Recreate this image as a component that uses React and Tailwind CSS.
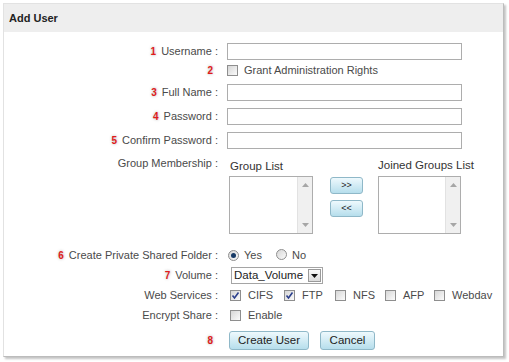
import React from 'react';

const Num = ({ n }) => (
  <span className="mr-[5px] text-[10px] font-bold text-[#e01b1b] [text-shadow:0_0_3px_#aaa]">{n}</span>
);

const Box = ({ checked }) => (
  <span className="inline-flex h-[11px] w-[11px] shrink-0 items-center justify-center border border-[#8e8e8e] bg-linear-to-br from-[#d6d6d6] to-[#fbfbfb]">
    {checked && (
      <svg width="9" height="9" viewBox="0 0 9 9">
        <path d="M1.5 4.5 L3.5 7 L7.5 1.5" fill="none" stroke="#2b3f8c" strokeWidth="1.6" />
      </svg>
    )}
  </span>
);

const Radio = ({ checked }) => (
  <span className="inline-flex h-[11px] w-[11px] shrink-0 items-center justify-center rounded-full border border-[#8e8e8e] bg-linear-to-br from-[#d6d6d6] to-[#fbfbfb]">
    {checked && <span className="h-[5px] w-[5px] rounded-full bg-[#173a66]" />}
  </span>
);

const Row = ({ num, label, children, className = 'h-[17px]' }) => (
  <div className={`grid grid-cols-[214px_1fr] gap-x-[9px] items-center ${className}`}>
    <div className="text-right text-[#4a4a4a] whitespace-nowrap">
      {num && <Num n={num} />}
      {label}
    </div>
    <div className="flex items-center">{children}</div>
  </div>
);

const TextBox = ({ type = 'text' }) => (
  <input type={type} className="h-[17px] w-[235px] border border-[#adadad] bg-white outline-none" />
);

const ListBox = ({ className }) => (
  <div className={`flex h-[58px] border border-[#adadad] bg-white ${className}`}>
    <div className="flex-1" />
    <div className="flex w-[15px] flex-col items-center justify-between border-l border-[#e2e2e2] bg-[#f0f0f0] py-[6px]">
      <svg width="7" height="4" viewBox="0 0 7 4"><path d="M0 4 L3.5 0 L7 4 Z" fill="#a6a6a6" /></svg>
      <svg width="7" height="4" viewBox="0 0 7 4"><path d="M0 0 L3.5 4 L7 0 Z" fill="#a6a6a6" /></svg>
    </div>
  </div>
);

const Btn = ({ children, className = '' }) => (
  <button className={`flex items-center justify-center rounded-[3px] border border-[#8fb8c8] bg-linear-to-b from-[#eef9fd] to-[#b6deec] text-[#222] ${className}`}>
    {children}
  </button>
);

const services = [
  { name: 'CIFS', checked: true, w: 'w-[54px]' },
  { name: 'FTP', checked: true, w: 'w-[51px]' },
  { name: 'NFS', checked: false, w: 'w-[50px]' },
  { name: 'AFP', checked: false, w: 'w-[49px]' },
  { name: 'Webdav', checked: false, w: 'w-[60px]' },
];

export default function App() {
  return (
    <div className="h-[362px] w-[509px] bg-white pl-[3px] pt-[3px] font-['Liberation_Sans',Arial,sans-serif] text-[11px] leading-[13px]">
      <div className="h-[354px] w-[501px] border border-[#e2e2e2] border-r-[#bcbcbc] border-b-[#bcbcbc] bg-white shadow-[2px_2px_2px_#c4c4c4]">
        <div className="flex h-[28px] items-center bg-[#eeeeee] pl-[5px] text-[11px] font-bold text-[#222]">
          Add User
        </div>

        <div className="flex flex-col pt-[11px]">
          <Row num="1" label="Username :">
            <TextBox />
          </Row>
          <Row num="2" className="mt-[2px] h-[17px]">
            <Box />
            <span className="ml-[6px] text-[#4a4a4a]">Grant Administration Rights</span>
          </Row>
          <Row num="3" label="Full Name :" className="mt-[5px] h-[17px]">
            <TextBox />
          </Row>
          <Row num="4" label="Password :" className="mt-[7px] h-[17px]">
            <TextBox type="password" />
          </Row>
          <Row num="5" label="Confirm Password :" className="mt-[7px] h-[17px]">
            <TextBox type="password" />
          </Row>

          <div className="mt-[6px] grid grid-cols-[214px_1fr] gap-x-[9px]">
            <div className="pt-[2px] text-right text-[#4a4a4a]">Group Membership :</div>
            <div className="ml-[2px] flex items-start">
              <div className="flex flex-col">
                <span className="pt-[5px] pb-[3px] pl-[1px] text-[11.5px] leading-[13px] text-[#333]">Group List</span>
                <ListBox className="w-[84px]" />
              </div>
              <div className="ml-[17px] mt-[22px] flex flex-col gap-[6px]">
                <Btn className="h-[17px] w-[33px] text-[9px]">&gt;&gt;</Btn>
                <Btn className="h-[17px] w-[33px] text-[9px]">&lt;&lt;</Btn>
              </div>
              <div className="ml-[15px] flex flex-col">
                <span className="pt-[4px] pb-[4px] text-[11.5px] leading-[13px] text-[#333]">Joined Groups List</span>
                <ListBox className="w-[83px]" />
              </div>
            </div>
          </div>

          <Row num="6" label="Create Private Shared Folder :" className="mt-[13px] h-[17px]">
            <span className="ml-[1px] flex items-center">
              <Radio checked />
              <span className="ml-[5px] text-[#4a4a4a]">Yes</span>
              <span className="ml-[14px]"><Radio /></span>
              <span className="ml-[5px] text-[#4a4a4a]">No</span>
            </span>
          </Row>

          <Row num="7" label="Volume :" className="mt-[3px] h-[17px]">
            <div className="ml-[4px] flex h-[17px] w-[92px] items-center border border-[#a5a5a5] bg-white">
              <span className="flex-1 pl-[2px] text-[11.5px] text-[#222]">Data_Volume</span>
              <span className="mr-[1px] flex h-[13px] w-[13px] items-center justify-center border border-[#9a9a9a] bg-linear-to-b from-[#fafafa] to-[#dcdcdc]">
                <svg width="7" height="4" viewBox="0 0 7 4"><path d="M0 0 L3.5 4 L7 0 Z" fill="#111" /></svg>
              </span>
            </div>
          </Row>

          <Row label="Web Services :" className="mt-[3px] h-[17px]">
            <div className="ml-[3px] flex items-center">
              {services.map((s) => (
                <span key={s.name} className={`flex items-center ${s.w}`}>
                  <Box checked={s.checked} />
                  <span className="ml-[7px] text-[#4a4a4a]">{s.name}</span>
                </span>
              ))}
            </div>
          </Row>

          <Row label="Encrypt Share :" className="mt-[3px] h-[17px]">
            <span className="ml-[3px] flex items-center">
              <Box />
              <span className="ml-[7px] text-[#4a4a4a]">Enable</span>
            </span>
          </Row>

          <Row num="8" className="mt-[7px] h-[19px]">
            <Btn className="ml-[2px] h-[19px] w-[80px] text-[11.5px]">Create User</Btn>
            <Btn className="ml-[11px] h-[19px] w-[55px] text-[11.5px]">Cancel</Btn>
          </Row>
        </div>
      </div>
    </div>
  );
}
